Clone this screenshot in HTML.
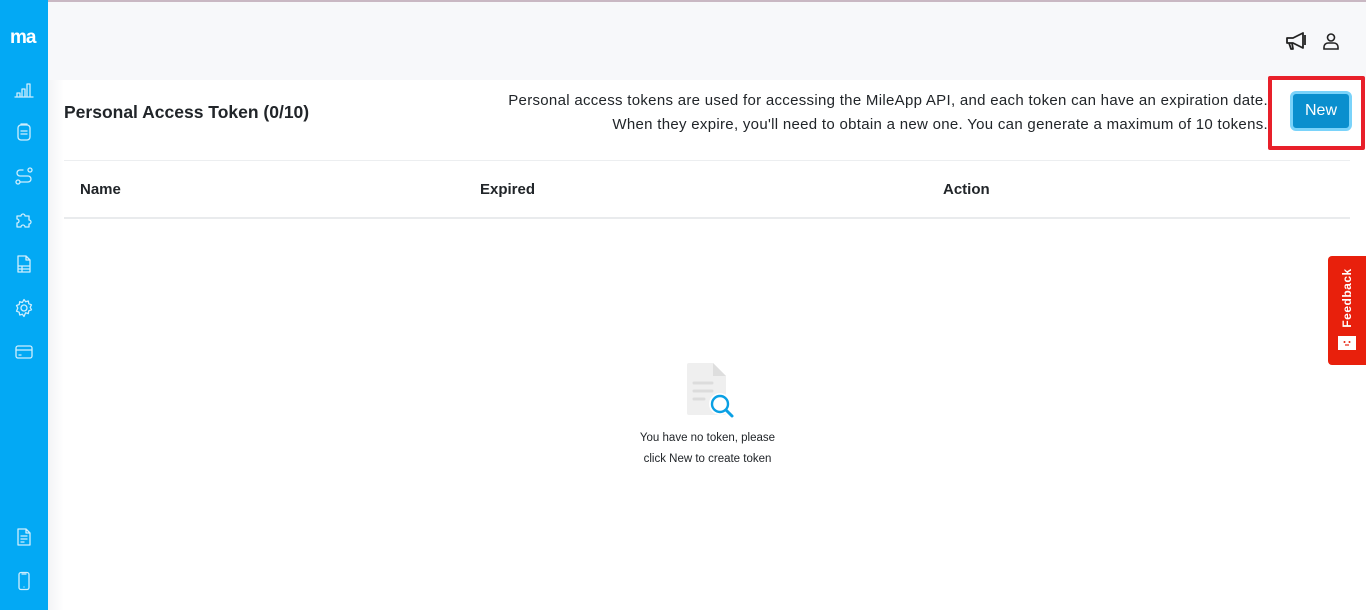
<!DOCTYPE html>
<html><head><meta charset="utf-8"><style>
*{margin:0;padding:0;box-sizing:border-box}
body{width:1366px;height:610px;overflow:hidden;font-family:"Liberation Sans",sans-serif;color:#212529;background:#fff;position:relative}
.topline{position:absolute;left:0;top:0;width:1366px;height:2px;background:#c9b8c3}
.side{position:absolute;left:0;top:0;width:48px;height:610px;background:#03a9f4}
.logo{position:absolute;left:10px;top:27px;color:#fff;font-weight:bold;font-size:19px;letter-spacing:-1px}
.side svg{position:absolute;left:14px;width:20px;height:20px;fill:none;stroke:#cfeefd;stroke-width:1.3;stroke-linecap:round;stroke-linejoin:round}
.head{position:absolute;left:48px;top:2px;width:1318px;height:78px;background:#f7f8fa}
.shadow{position:absolute;left:48px;top:80px;width:16px;height:530px;background:linear-gradient(90deg,#f3f4f6,#fff)}
.title{position:absolute;left:64px;top:102px;font-size:17.5px;font-weight:bold}
.desc{position:absolute;right:98px;top:89px;text-align:right;font-size:15px;line-height:24px;white-space:nowrap;letter-spacing:0.3px}
.btn{position:absolute;left:1290px;top:91px;width:62px;height:40px;background:#0a8fce;border:3px solid #7ad3fa;border-radius:6px;color:#fff;font-size:16px;text-align:center;line-height:34px}
.red{position:absolute;left:1268px;top:76px;width:97px;height:74px;border:4px solid #e8202a;border-radius:2px}
.hr1{position:absolute;left:64px;top:160px;width:1286px;height:1px;background:#eceef0}
.hr2{position:absolute;left:64px;top:217px;width:1286px;height:2px;background:#e9ebed}
.th{position:absolute;top:181px;font-size:15px;font-weight:bold}
.fb{position:absolute;left:1328px;top:256px;width:38px;height:109px;background:#e8200c;border-radius:4px 0 0 4px}
.fb span{position:absolute;left:19px;top:42px;transform:translate(-50%,-50%) rotate(-90deg);color:#fff;font-size:12px;font-weight:bold;white-space:nowrap;letter-spacing:.5px}
.empty{position:absolute;left:600px;top:428px;width:215px;text-align:center;font-size:11.5px;line-height:21px}
</style></head><body>
<div class="head"></div>
<div class="topline"></div>
<div class="side">
<div class="logo">ma</div>
<svg style="top:80px" viewBox="0 0 20 20"><path d="M1 17h18M3 16v-3h3v3M8 16V9h3v7M13 16V4h3v12"/></svg>
<svg style="top:122px" viewBox="0 0 20 20"><rect x="4" y="3" width="12" height="15" rx="3"/><path d="M7 3V2h6v1M7 9h6M7 12h6"/></svg>
<svg style="top:166px" viewBox="0 0 20 20"><circle cx="4" cy="16" r="2"/><circle cx="16" cy="4" r="2"/><path d="M6 16h8a3 3 0 0 0 0-6H6a3 3 0 0 1 0-6h3"/></svg>
<svg style="top:210px" viewBox="0 0 20 20"><path d="M3 6h4a2 2 0 0 1 4 0h4v4a2 2 0 0 1 0 4v3h-4a2 2 0 0 0-4 0H3v-4a2 2 0 0 0 0-4z"/></svg>
<svg style="top:254px" viewBox="0 0 20 20"><path d="M4 2h8l4 4v12H4zM12 2v4h4M4 12h12M4 15h12M8 12v6"/></svg>
<svg style="top:298px" viewBox="0 0 20 20"><circle cx="10" cy="10" r="3"/><path d="M10 1.5l1.6 2.3 2.7-.8.5 2.8 2.7 1-1.3 2.5 1.3 2.5-2.7 1-.5 2.8-2.7-.8L10 18.5l-1.6-2.3-2.7.8-.5-2.8-2.7-1L3.8 10 2.5 7.5l2.7-1 .5-2.8 2.7.8z"/></svg>
<svg style="top:342px" viewBox="0 0 20 20"><rect x="2" y="4" width="16" height="12" rx="2"/><path d="M2 8h16M5 13h2"/></svg>
<svg style="top:527px" viewBox="0 0 20 20"><path d="M4 2h8l4 4v12H4zM12 2v4h4M7 9h6M7 12h6M7 15h3"/></svg>
<svg style="top:571px" viewBox="0 0 20 20"><rect x="5" y="1.5" width="10" height="17" rx="2"/><path d="M8 3h4M10 16h0"/></svg>
</div>
<div class="shadow"></div>
<svg style="position:absolute;left:1285px;top:31px" width="22" height="20" viewBox="0 0 22 20" fill="none" stroke="#222" stroke-width="1.8" stroke-linejoin="round"><path d="M2 7h6l10-5v15L8 12H2zM4 12l2 6h2l-1-6M20 4v10"/></svg>
<svg style="position:absolute;left:1322px;top:32px" width="18" height="18" viewBox="0 0 18 18" fill="none" stroke="#222" stroke-width="1.6"><circle cx="9" cy="5.5" r="3.5"/><path d="M2 17v-2a4 4 0 0 1 4-4h6a4 4 0 0 1 4 4v2z"/></svg>
<div class="title">Personal Access Token (0/10)</div>
<div class="desc">Personal access tokens are used for accessing the MileApp API, and each token can have an expiration date.<br>When they expire, you'll need to obtain a new one. You can generate a maximum of 10 tokens.</div>
<div class="red"></div>
<div class="btn">New</div>
<div class="hr1"></div>
<div class="th" style="left:80px">Name</div>
<div class="th" style="left:480px">Expired</div>
<div class="th" style="left:943px">Action</div>
<div class="hr2"></div>
<div class="fb"><span>Feedback</span>
<svg style="position:absolute;left:10px;top:78px" width="18" height="16" viewBox="0 0 18 16"><path d="M0 2h18v14H4l-4 0z" fill="#fff"/><circle cx="6.5" cy="8" r="1" fill="#e8200c"/><circle cx="11.5" cy="8" r="1" fill="#e8200c"/><path d="M7 11h4" stroke="#e8200c" stroke-width="1.2"/></svg></div>
<svg style="position:absolute;left:686px;top:362px" width="50" height="58" viewBox="0 0 50 58"><path d="M3 1h24l13 13v37a2 2 0 0 1-2 2H3a2 2 0 0 1-2-2V3a2 2 0 0 1 2-2z" fill="#efefef"/><path d="M27 1v13h13z" fill="#dedede"/><path d="M8 21h18M8 29h18M8 37h10" stroke="#dcdcdc" stroke-width="3" stroke-linecap="round"/><circle cx="34" cy="42" r="11" fill="#fff"/><circle cx="34" cy="42" r="8" fill="none" stroke="#0aa0e4" stroke-width="2.4"/><path d="M40 48l6 6" stroke="#0aa0e4" stroke-width="3" stroke-linecap="round"/></svg>
<div class="empty">You have no token, please<br>click New to create token</div>
</body></html>
